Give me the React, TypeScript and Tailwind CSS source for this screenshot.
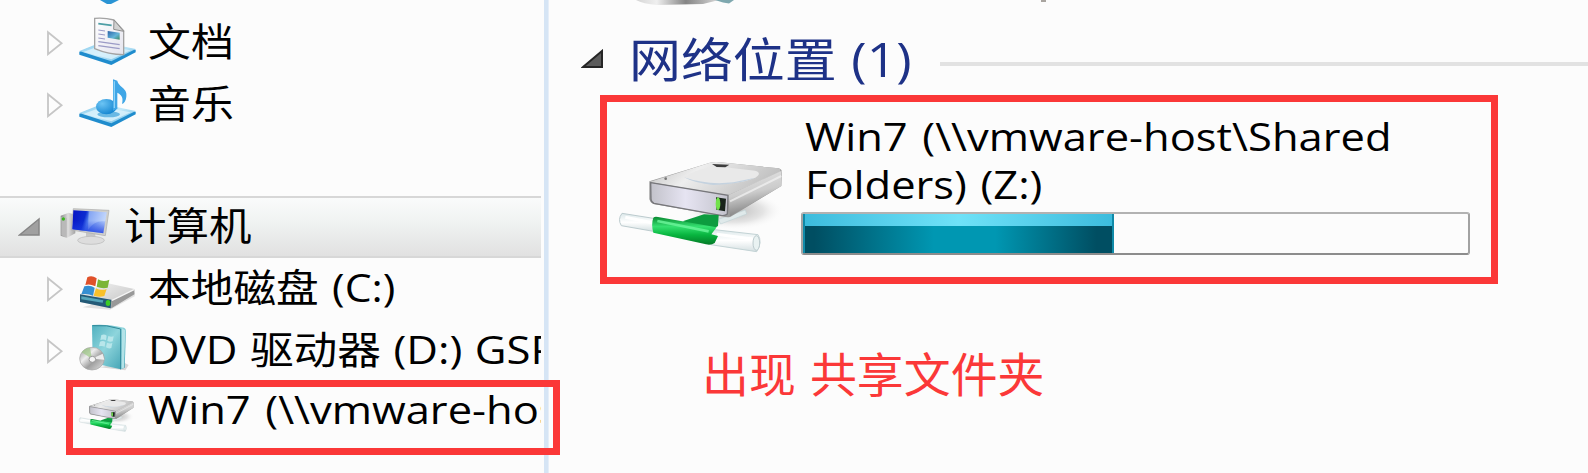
import type { ReactNode } from "react";

const FONT = "font-['Open_Sans','Noto_Sans_CJK_SC',sans-serif]";

function Expander() {
  return (
    <svg className="h-[26px] w-[18px] shrink-0" viewBox="0 0 18 26" fill="none">
      <path d="M2 2.2 L15.6 13.2 L2 24.2 Z" stroke="#c6c6c6" strokeWidth="1.8" fill="#fdfdfd" />
    </svg>
  );
}

function Platform() {
  return (
    <>
      <path d="M238 155 L306 128 L407 149 L407 157 L334 195 L238 164 Z" fill="#1f8ccd" />
      <path d="M238 153 L306 126 L407 147 L334 184 Z" fill="url(#plat)" />
      <path d="M250 156 L306 135 L392 151 L334 178 Z" fill="#dcf3fc" opacity=".8" />
    </>
  );
}

function DocumentIcon() {
  return (
    <svg className="h-[62px] w-[60px] shrink-0" viewBox="234 36 180 186">
      <defs>
        <linearGradient id="plat" x1="0" y1="0" x2="1" y2="1">
          <stop offset="0" stopColor="#7cc6ea" />
          <stop offset=".5" stopColor="#c4e9f9" />
          <stop offset="1" stopColor="#5db5e2" />
        </linearGradient>
        <linearGradient id="paper" x1="0" y1="0" x2="1" y2="1">
          <stop offset="0" stopColor="#ffffff" />
          <stop offset="1" stopColor="#e4e4ee" />
        </linearGradient>
        <linearGradient id="photo" x1="0" y1="0" x2="1" y2="1">
          <stop offset="0" stopColor="#2a62a8" />
          <stop offset=".6" stopColor="#62b4d8" />
          <stop offset="1" stopColor="#3e8a62" />
        </linearGradient>
      </defs>
      <Platform />
      <path d="M284 55 Q312 52 342 60 L371 92 L371 164 Q326 164 284 146 Z" fill="url(#paper)" stroke="#a3a3a3" strokeWidth="4" />
      <path d="M342 60 L341 88 L371 94 Z" fill="#d2d2d2" stroke="#8f8f8f" strokeWidth="3" />
      <path d="M295 71 L335 76" stroke="#4d9ea6" strokeWidth="5" />
      <path d="M323 93 L359 98 L359 119 L323 113 Z" fill="url(#photo)" />
      <path d="M295 90 l20 3 M295 102 l20 3 M295 114 l20 3 M295 125 l64 9 M295 137 l64 9" stroke="#9b9bc6" strokeWidth="3.5" />
    </svg>
  );
}

function MusicIcon() {
  return (
    <svg className="h-[62px] w-[60px] shrink-0" viewBox="234 36 180 186">
      <defs>
        <radialGradient id="note" cx=".3" cy=".3" r=".8">
          <stop offset="0" stopColor="#6cc4f4" />
          <stop offset="1" stopColor="#0f82cf" />
        </radialGradient>
      </defs>
      <Platform />
      <ellipse cx="326" cy="157" rx="34" ry="9" fill="#6ab9e4" />
      <ellipse cx="319" cy="134" rx="31" ry="23" fill="url(#note)" />
      <path d="M339 52 L352 56 C356 76 384 78 379 104 C378 116 372 124 366 126 C371 106 364 98 352 92 L352 141 L339 146 Z" fill="#3fa6e6" />
      <path d="M343 58 V138" stroke="#8bd2f8" strokeWidth="4" />
    </svg>
  );
}

function ComputerIcon() {
  return (
    <svg className="h-[42px] w-[54px] shrink-0" viewBox="174 78 162 126">
      <defs>
        <linearGradient id="screen" x1="0" y1="0" x2="1" y2=".2">
          <stop offset="0" stopColor="#0713c4" />
          <stop offset=".4" stopColor="#0c2bd0" />
          <stop offset=".52" stopColor="#4f7cec" />
          <stop offset="1" stopColor="#b2cbfa" />
        </linearGradient>
        <linearGradient id="tower" x1="0" x2="1">
          <stop offset="0" stopColor="#8b8b8b" />
          <stop offset=".5" stopColor="#dedede" />
          <stop offset="1" stopColor="#a3a3a3" />
        </linearGradient>
        <linearGradient id="lower" x1="0" y1="0" x2="0" y2="1">
          <stop offset=".45" stopColor="#1a3be0" stopOpacity="0" />
          <stop offset="1" stopColor="#1a3be0" stopOpacity=".85" />
        </linearGradient>
      </defs>
      <path d="M182 107 L206 98 L226 104 L226 160 L200 174 L182 167 Z" fill="url(#tower)" />
      <path d="M184 110 L200 114 L200 172 L184 166 Z" fill="#b9b9b9" />
      <circle cx="190" cy="117" r="5" fill="#39b51f" />
      <path d="M258 158 h28 v18 h-28 Z" fill="#c6c6c6" />
      <ellipse cx="273" cy="181" rx="40" ry="12" fill="#dddddd" stroke="#b6b6b6" strokeWidth="2" />
      <path d="M220 86 L327 91 L316 167 L214 150 Z" fill="#d0d0cc" stroke="#aaa" strokeWidth="2" />
      <path d="M220 91 L320 97 L310 160 L217 148 Z" fill="url(#screen)" />
      <path d="M266 94 L320 97 L316 124 Q282 120 264 150 Z" fill="#dce9ff" opacity=".4" />
      <path d="M220 91 L320 97 L310 160 L217 148 Z" fill="url(#lower)" />
    </svg>
  );
}

function LocalDiskIcon() {
  return (
    <svg className="h-[62px] w-[60px] shrink-0" viewBox="234 237 180 186">
      <defs>
        <linearGradient id="disk" x1="0" y1="0" x2="1" y2="1">
          <stop offset="0" stopColor="#f6f6f6" />
          <stop offset=".6" stopColor="#d5d5d5" />
          <stop offset="1" stopColor="#8a8a8a" />
        </linearGradient>
      </defs>
      <path d="M248 385 L330 392 L404 352 L404 340 Z" fill="#cfcfcf" opacity=".6" />
      <path d="M240 344 L320 312 L403 330 L403 346 L332 388 L240 369 Z" fill="url(#disk)" />
      <path d="M334 366 L403 332 L403 346 L334 388 Z" fill="#999999" />
      <path d="M336 364 L402 332" stroke="#f4f4f4" strokeWidth="4" />
      <path d="M240 346 L334 362 L332 388 L240 369 Z" fill="#245a77" />
      <path d="M244 352 L310 364 L308 371 L244 361 Z" fill="#55a6bb" />
      <ellipse cx="324" cy="372" rx="7" ry="9" fill="#3ccc24" />
      <path d="M262 295 Q275 287 290 298 L286 322 Q270 314 256 318 Z" fill="#e0512a" />
      <path d="M294 301 Q310 310 328 302 L323 326 Q307 330 290 323 Z" fill="#7bb536" />
      <path d="M253 322 Q270 317 284 326 L279 350 Q262 342 244 346 Z" fill="#358fd2" />
      <path d="M288 328 Q303 336 320 330 L313 351 Q298 356 281 350 Z" fill="#f8c02b" />
    </svg>
  );
}

function DvdIcon() {
  return (
    <svg className="h-[62px] w-[60px] shrink-0" viewBox="234 63 180 186">
      <defs>
        <linearGradient id="box" x1="0" y1="0" x2="1" y2="1">
          <stop offset="0" stopColor="#4fb0bf" />
          <stop offset=".45" stopColor="#8ed5dc" />
          <stop offset="1" stopColor="#3c9eb0" />
        </linearGradient>
        <linearGradient id="disc" x1="0" y1="0" x2="1" y2="1">
          <stop offset="0" stopColor="#8e8e8e" />
          <stop offset=".35" stopColor="#ededed" />
          <stop offset=".6" stopColor="#9f9f9f" />
          <stop offset="1" stopColor="#e3e3e3" />
        </linearGradient>
      </defs>
      <path d="M300 205 L376 214 L386 198 L370 190 Z" fill="#d7d7d7" />
      <path d="M276 78 Q320 74 372 86 Q378 88 378 96 L374 206 L362 211 L278 192 Z" fill="url(#box)" />
      <path d="M278 80 Q320 76 362 90 L362 211" fill="none" stroke="#2f8798" strokeWidth="3" />
      <path d="M366 88 L376 94 L372 206 L364 210 Z" fill="#b3e3e8" />
      <path d="M304 108 q10 -4 16 2 l-2 14 q-8 -5 -17 -1 Z M325 111 q9 4 16 1 l-3 15 q-8 3 -16 -2 Z M300 128 q10 -4 16 1 l-2 14 q-8 -4 -17 -1 Z M321 131 q9 4 16 1 l-3 15 q-8 3 -16 -2 Z" fill="#b8e6ea" />
      <ellipse cx="276" cy="179" rx="37" ry="34" fill="url(#disc)" stroke="#a5a5a5" strokeWidth="2" />
      <path d="M276 179 L245 160 Q254 147 270 146 Z" fill="#9ec986" opacity=".7" />
      <path d="M276 179 L308 164 L313 182 Z" fill="#fff" opacity=".8" />
      <ellipse cx="277" cy="181" rx="10" ry="9" fill="#f5f5f5" stroke="#999" strokeWidth="3" />
    </svg>
  );
}

function NetworkDrive({ className, id }: { className: string; id: string }) {
  return (
    <svg className={className} viewBox="48 48 510 300" preserveAspectRatio="none">
      <defs>
        <linearGradient id={id + "top"} x1="0" y1="0" x2="1" y2=".3">
          <stop offset="0" stopColor="#bdbdbd" />
          <stop offset=".4" stopColor="#eeeeee" />
          <stop offset="1" stopColor="#c0c0c0" />
        </linearGradient>
        <linearGradient id={id + "front"} x1="0" x2="1">
          <stop offset="0" stopColor="#c2c2ca" />
          <stop offset=".45" stopColor="#e6e4f2" />
          <stop offset="1" stopColor="#c3c3cc" />
        </linearGradient>
        <linearGradient id={id + "side"} x1="0" y1="0" x2=".25" y2="1">
          <stop offset="0" stopColor="#e8e8e8" />
          <stop offset=".55" stopColor="#cccccc" />
          <stop offset="1" stopColor="#808080" />
        </linearGradient>
        <linearGradient id={id + "green"} x1="0" y1="0" x2="0" y2="1">
          <stop offset="0" stopColor="#0a8a32" />
          <stop offset=".35" stopColor="#35e070" />
          <stop offset=".65" stopColor="#08b53f" />
          <stop offset="1" stopColor="#057a28" />
        </linearGradient>
        <radialGradient id={id + "shade"}>
          <stop offset="0" stopColor="#bdbdbd" />
          <stop offset=".6" stopColor="#e4e4e4" />
          <stop offset="1" stopColor="#fcfcfc" stopOpacity="0" />
        </radialGradient>
        <linearGradient id={id + "glass"} x1="0" y1="0" x2="0" y2="1">
          <stop offset="0" stopColor="#dce8ea" />
          <stop offset=".5" stopColor="#ffffff" />
          <stop offset="1" stopColor="#d4dfe1" />
        </linearGradient>
      </defs>
      <ellipse cx="400" cy="212" rx="150" ry="58" fill={`url(#${id}shade)`} />
      <path d="M355 238 L436 210 L440 222 L362 252 Z" fill="#dfe9ea" stroke="#c1d3d6" strokeWidth="2" />
      <path d="M148 124 L330 68 Q345 65 360 67 L536 85 Q546 88 546 98 L544 138 L392 230 Q380 234 366 228 L160 192 Q150 188 148 178 Z" fill="#9a9a9a" />
      <path d="M148 126 L330 68 Q345 65 360 67 L536 85 Q544 88 540 96 L384 166 Z" fill={`url(#${id}top)`} />
      <path d="M384 166 L545 92 L544 138 L390 229 Z" fill={`url(#${id}side)`} />
      <path d="M390 184 L544 108" stroke="#f4f4f4" strokeWidth="6" opacity=".7" />
      <path d="M252 112 Q285 88 350 79 L465 92 Q488 99 466 113 Q420 132 340 132 Q285 130 252 112 Z" fill="#e9e9e9" />
      <path d="M252 112 Q320 136 400 127 L466 113 Q420 132 340 135 Q285 130 252 112 Z" fill="#c4d2df" />
      <path d="M336 72 L388 74 L376 82 L350 81 Z" fill="#3d3d3d" />
      <circle cx="197" cy="116" r="4" fill="#777" />
      <path d="M152 128 L384 166 L382 222 Q374 229 362 226 L162 190 Q154 187 153 178 Z" fill={`url(#${id}front)`} stroke="#77777b" strokeWidth="4" />
      <path d="M348 172 L378 176 L375 214 L349 209 Z" fill="#18231a" />
      <ellipse cx="354" cy="191" rx="7" ry="19" fill="#72e24c" />
      <path d="M66 220 L166 236 L160 274 L64 257 Q52 238 66 220 Z" fill={`url(#${id}glass)`} stroke="#bccbce" strokeWidth="3" />
      <path d="M76 232 L156 248" stroke="#fff" strokeWidth="9" />
      <path d="M335 268 L474 284 Q488 306 470 335 L332 314 Z" fill={`url(#${id}glass)`} stroke="#c3d3d5" strokeWidth="3" />
      <path d="M350 283 L462 298" stroke="#fff" strokeWidth="9" />
      <ellipse cx="469" cy="309" rx="10" ry="22" fill="#e9f2f2" stroke="#bccbce" strokeWidth="3" />
      <path d="M248 244 L312 223 L356 225 L354 258 L330 272 Z" fill="#0d9c3f" />
      <path d="M160 233 Q164 229 174 231 L350 262 L334 283 L354 288 L344 309 Q334 316 318 313 L160 278 Q153 252 160 233 Z" fill={`url(#${id}green)`} />
      <path d="M172 243 L326 274" stroke="#6df79c" strokeWidth="8" opacity=".8" />
    </svg>
  );
}

function TreeRow({ icon, arrow = true, children }: { icon: ReactNode; arrow?: boolean; children: ReactNode }) {
  return (
    <div className="flex h-[62px] shrink-0 items-center pl-[46px] whitespace-nowrap">
      {arrow ? <Expander /> : <span className="w-[18px] shrink-0" />}
      <span className="ml-[14px] flex w-[60px] shrink-0">{icon}</span>
      <span className="ml-[10px] flex pb-[5px]">{children}</span>
    </div>
  );
}

export default function App() {
  return (
    <div className={`relative flex h-[473px] w-[1588px] overflow-hidden bg-[#fcfcfc] text-[39px] leading-[48px] text-black ${FONT}`}>
      <aside className="flex w-[541px] shrink-0 flex-col overflow-hidden">
        <svg className="ml-[98px] h-3 w-6 shrink-0" viewBox="0 0 24 12">
          <path d="M2 0 H21 L13 4 H9 Z" fill="#2a94d4" />
        </svg>
        <TreeRow icon={<DocumentIcon />}>
          <span className="origin-left scale-x-[1.1]">文档</span>
        </TreeRow>
        <TreeRow icon={<MusicIcon />}>
          <span className="origin-left scale-x-[1.1]">音乐</span>
        </TreeRow>
        <div className="mt-[60px] flex h-[62px] shrink-0 items-center border-y-2 border-[#d7d7d7] bg-linear-to-b from-[#fafbfb] via-[#f0f3f2] via-40% to-[#e1e1e1] pl-[18px] whitespace-nowrap">
          <svg className="h-[20px] w-[23px] shrink-0" viewBox="0 0 23 20">
            <path d="M1.5 18 L21 2 V18 Z" fill="#a0a0a0" stroke="#858585" strokeWidth="1.5" />
          </svg>
          <span className="ml-[17px] flex"><ComputerIcon /></span>
          <span className="ml-[12px] origin-left scale-x-[1.09] pb-[5px]">计算机</span>
        </div>
        <TreeRow icon={<LocalDiskIcon />}>
          <span className="origin-left scale-x-[1.095] [word-spacing:2px]">本地磁盘 (C:)</span>
        </TreeRow>
        <TreeRow icon={<DvdIcon />}>
          <span className="origin-left scale-x-[1.12] [word-spacing:1px]">DVD 驱动器 (D:) GSP1RMC</span>
        </TreeRow>
        <TreeRow arrow={false} icon={<NetworkDrive id="small" className="mt-1 h-[36px] w-[57px]" />}>
          <span className="origin-left scale-x-[1.115] pb-[3px] [word-spacing:3px]">Win7 (\\vmware-host\Shared Folders)</span>
        </TreeRow>
      </aside>

      <div className="ml-[3px] w-[5px] shrink-0 border-r border-[#e6eef8] bg-[#d6e5f5]" />

      <main className="flex flex-1 flex-col">
        <div className="flex h-8 shrink-0 items-start">
          <svg className="ml-[84px] h-[6px] w-[110px]" viewBox="0 0 110 6">
            <defs>
              <linearGradient id="edge">
                <stop offset="0" stopColor="#d5d5d5" />
                <stop offset=".25" stopColor="#efefef" />
                <stop offset=".6" stopColor="#858585" />
                <stop offset="1" stopColor="#d8d8d8" />
              </linearGradient>
            </defs>
            <path d="M3 0 Q10 4 24 5 L70 4 L86 0 Z" fill="url(#edge)" />
            <path d="M82 0 H101 L96 3.5 L90 2.5 Z" fill="#7fa8af" />
          </svg>
          <span className="ml-[298px] h-[2px] w-[5px] bg-[#a9a5a0]" />
        </div>
        <div className="flex h-[62px] shrink-0 items-center pl-[32px] text-[#1e3287]">
          <svg className="-mt-2 h-[20px] w-[23px] shrink-0" viewBox="0 0 23 20">
            <path d="M2 18 L21 2 V18 Z" fill="#5c5c5c" stroke="#262626" strokeWidth="2" />
          </svg>
          <span className="ml-[25px] flex w-[311px] pb-[7px] whitespace-nowrap">
            <span className="origin-left scale-x-[1.105] text-[47px] leading-[55px] [word-spacing:1px]">网络位置 (1)</span>
          </span>
          <span className="mt-px h-1 flex-1 bg-[#e2e2e2]" />
        </div>
        <section className="mt-px ml-[51px] flex h-[189px] w-[898px] shrink-0 border-[7px] border-[#fb3838]">
          <NetworkDrive id="big" className="mt-[54px] ml-[9px] h-[100px] w-[170px] shrink-0" />
          <div className="ml-[15px] flex w-[669px] flex-col pt-[10px]">
            <div className="ml-[4px] flex h-[100px] flex-col items-start whitespace-nowrap">
              <span className="origin-left scale-x-[1.115] [word-spacing:3px]">Win7 (\\vmware-host\Shared</span>
              <span className="origin-left scale-x-[1.115] [word-spacing:2px]">Folders) (Z:)</span>
            </div>
            <div className="h-[43px] shrink-0 rounded-[3px] border-2 border-t-[#b2b2b2] border-r-[#a2a2a2] border-b-[#8c8c8c] border-l-[#a2a2a2] bg-[#fcfcfc]">
              <div className="flex h-full w-[311px] flex-col border-x-2 border-x-[#108aa8]">
                <div className="h-[12px] bg-linear-to-r from-[#3cbcdd] via-[#6fe2f8] to-[#3cbcdd]" />
                <div className="flex-1 bg-[linear-gradient(90deg,#004e62_3%,#0097b2_42%,#0097b2_62%,#004e62_95%)]" />
              </div>
            </div>
          </div>
        </section>
        <p className="mt-[60px] ml-[153px] text-[46.9px] leading-[60px] whitespace-nowrap text-[#fb3838] [word-spacing:2px]">出现 共享文件夹</p>
      </main>

      <div className="absolute top-[380px] left-[66px] h-[75px] w-[494px] border-[7px] border-[#fb3838]" />
    </div>
  );
}
